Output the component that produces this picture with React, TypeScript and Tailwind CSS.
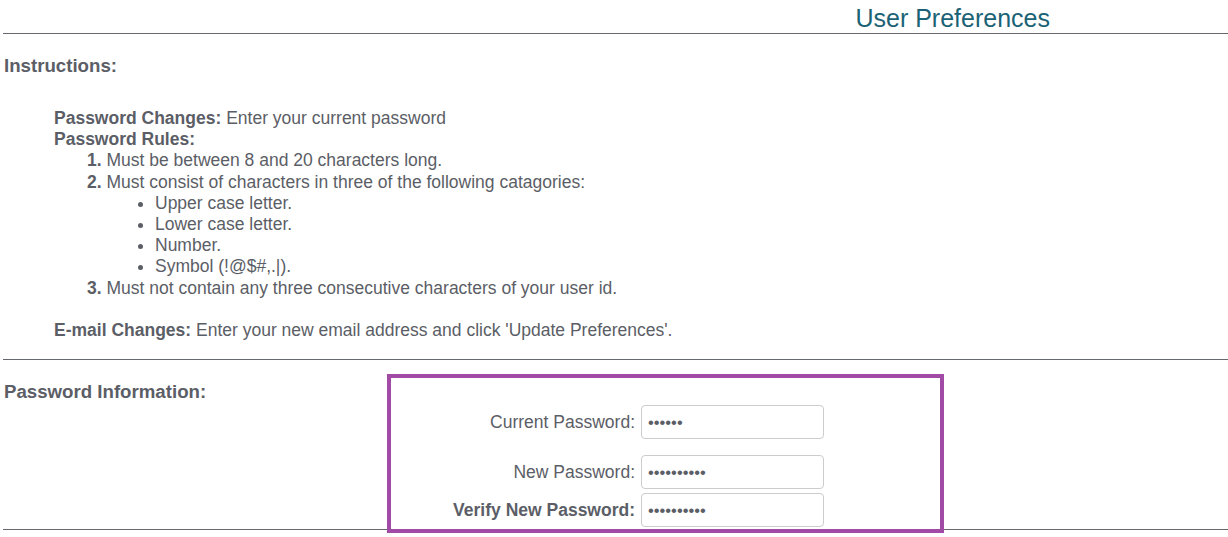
import React from "react";

const font = { fontFamily: '"Liberation Sans", Arial, sans-serif' };

function Field({
  label,
  value,
  bold,
  className,
}: {
  label: string;
  value: string;
  bold?: boolean;
  className?: string;
}) {
  return (
    <div className={`grid grid-cols-[632px_183px] gap-x-[6px] items-center ${className ?? ""}`}>
      <label className={`text-right text-[17.5px] text-[#5b5e66] ${bold ? "font-bold" : ""}`}>
        {label}:
      </label>
      <input
        type="password"
        readOnly
        defaultValue={value}
        className="h-[34px] w-[183px] rounded-[4px] border border-[#cccccc] bg-white px-[6px] text-[16.5px] text-[#5b5e66] outline-none"
        style={font}
      />
    </div>
  );
}

export default function App() {
  return (
    <div className="relative h-[537px] w-[1228px] overflow-hidden bg-white pl-[3px] text-[#5b5e66]" style={font}>
      <div className="flex justify-end pr-[178px] pt-[3px]">
        <h1 className="text-[25px] leading-[30px] text-[#1b6275]">User Preferences</h1>
      </div>
      <hr className="border-0 border-t border-[#666870]" />

      <h2 className="mt-[21px] pl-[1px] text-[18.67px] font-bold leading-[22px]">Instructions:</h2>

      <div className="mt-[31px] pl-[51px] text-[17.5px] leading-[21.2px]">
        <div>
          <b>Password Changes:</b> Enter your current password
        </div>
        <div>
          <b>Password Rules:</b>
        </div>
        <div className="pl-[33px]">
          <div>
            <b>1.</b> Must be between 8 and 20 characters long.
          </div>
          <div>
            <b>2.</b> Must consist of characters in three of the following catagories:
          </div>
          <ul className="list-disc pl-[68px] marker:text-[#5b5e66]">
            <li>Upper case letter.</li>
            <li>Lower case letter.</li>
            <li>Number.</li>
            <li>Symbol (!@$#,.|).</li>
          </ul>
          <div>
            <b>3.</b> Must not contain any three consecutive characters of your user id.
          </div>
        </div>
        <div className="h-[21.2px]" />
        <div>
          <b>E-mail Changes:</b> Enter your new email address and click 'Update Preferences'.
        </div>
      </div>

      <hr className="mt-[18px] border-0 border-t border-[#666870]" />

      <h2 className="mt-[21px] pl-[1px] text-[18.67px] font-bold leading-[22px]">Password Information:</h2>

      <div className="mt-[2px]">
        <Field label="Current Password" value="123456" />
        <Field label="New Password" value="1234567890" className="mt-[16px]" />
        <Field label="Verify New Password" value="1234567890" bold className="mt-[4px]" />
      </div>

      <hr className="mt-[2px] border-0 border-t border-[#666870]" />

      <div className="pointer-events-none absolute left-[387px] top-[374px] h-[159px] w-[557px] border-[4px] border-[#a24ba6]" />
    </div>
  );
}
